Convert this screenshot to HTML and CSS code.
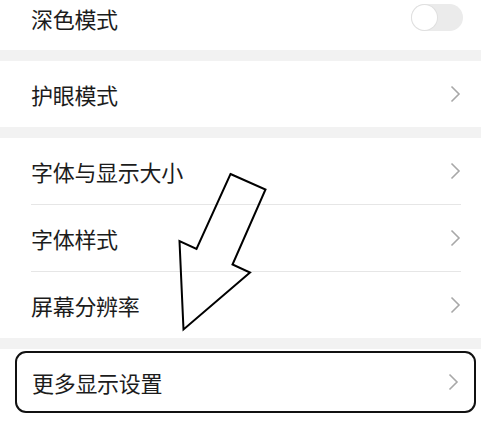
FILE: index.html
```html
<!DOCTYPE html>
<html lang="zh-CN">
<head>
  <meta charset="UTF-8">
  <title>显示设置</title>
  <link rel="stylesheet" href="styles.css">
</head>
<body>

  <div class="page">
    <div class="group">
      <div class="row first">
        <span class="label">深色模式</span>
        <span class="toggle"><span class="knob"></span></span>
      </div>
    </div>

    <div class="gap"></div>

    <div class="group">
      <div class="row">
        <span class="label">护眼模式</span>
        <svg class="chev" width="11" height="18" viewBox="0 0 11 18"><path d="M1.5 1.5 L9 9 L1.5 16.5" fill="none" stroke="#a8a8a8" stroke-width="1.6"/></svg>
      </div>
    </div>

    <div class="gap"></div>

    <div class="group">
      <div class="row divided">
        <span class="label">字体与显示大小</span>
        <svg class="chev" width="11" height="18" viewBox="0 0 11 18"><path d="M1.5 1.5 L9 9 L1.5 16.5" fill="none" stroke="#a8a8a8" stroke-width="1.6"/></svg>
      </div>
      <div class="row divided">
        <span class="label">字体样式</span>
        <svg class="chev" width="11" height="18" viewBox="0 0 11 18"><path d="M1.5 1.5 L9 9 L1.5 16.5" fill="none" stroke="#a8a8a8" stroke-width="1.6"/></svg>
      </div>
      <div class="row">
        <span class="label">屏幕分辨率</span>
        <svg class="chev" width="11" height="18" viewBox="0 0 11 18"><path d="M1.5 1.5 L9 9 L1.5 16.5" fill="none" stroke="#a8a8a8" stroke-width="1.6"/></svg>
      </div>
    </div>

    <div class="gap"></div>

    <div class="group last">
      <div class="row boxed">
        <span class="label">更多显示设置</span>
        <svg class="chev" width="11" height="18" viewBox="0 0 11 18"><path d="M1.5 1.5 L9 9 L1.5 16.5" fill="none" stroke="#a8a8a8" stroke-width="1.6"/></svg>
      </div>
    </div>
  </div>

  <!-- hand-drawn pointer over the list -->
  <svg class="arrow" width="481" height="424" viewBox="0 0 481 424">
    <polygon points="230.5,174 265.5,189.5 232.5,264.5 250,272.5 183.5,329.5 179.5,241 196.5,249"
             fill="none" stroke="#000" stroke-width="2" stroke-linejoin="miter"/>
  </svg>

</body>
</html>
```

FILE: styles.css
```css
body {
  margin: 0;
  background-color: #ffffff;
  font-family: "Noto Sans CJK SC", "Noto Sans", sans-serif;
  color: #1c1c1c;
  overflow: hidden;
}

.page {
  margin-top: -15px;
}

.group {
  background-color: #ffffff;
}

.gap {
  height: 11px;
  background-color: #f2f2f2;
}

.row {
  display: flex;
  justify-content: space-between;
  align-items: center;
  height: 66px;
  margin: 0 20px 0 31px;
  box-sizing: border-box;
}

.row.first {
  height: 65px;
}

.row.divided {
  height: 67px;
  border-bottom: 1px solid #e6e6e6;
}

.label {
  font-size: 22px;
  line-height: 1;
  letter-spacing: -0.3px;
}

.chev {
  display: block;
  margin-right: 0;
}

.toggle {
  position: relative;
  width: 52px;
  height: 27px;
  border-radius: 14px;
  background-color: #ebebeb;
  margin-right: -2px;
}

.knob {
  position: absolute;
  left: 1px;
  top: 1px;
  width: 25px;
  height: 25px;
  border-radius: 50%;
  background-color: #ffffff;
  box-shadow: 0 0 0 1px #e0e0e0;
}

.group.last {
  padding: 2px 5px 10px 15px;
}

.row.boxed {
  margin: 0;
  height: 62px;
  padding: 0 15px 0 15px;
  border: 2px solid #111;
  border-radius: 11px;
}

.arrow {
  position: absolute;
  left: 0;
  top: 0;
  pointer-events: none;
}
```
